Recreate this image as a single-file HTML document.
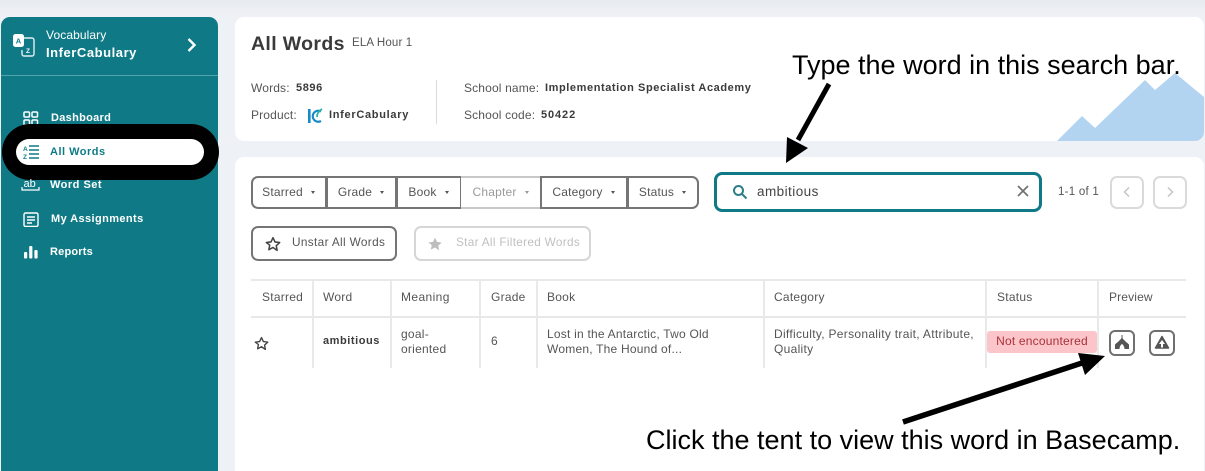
<!DOCTYPE html>
<html><head><meta charset="utf-8">
<style>
html,body{margin:0;padding:0;width:1205px;height:471px;overflow:hidden}
body{position:relative;background:linear-gradient(#e8ebf0,#eef1f6 17px);font-family:"Liberation Sans",sans-serif;color:#555}
.a{position:absolute;white-space:nowrap}
.t{position:absolute;white-space:nowrap;font-size:12px;line-height:14px;color:#555;letter-spacing:.25px}
.b{font-weight:bold;color:#3b3b3b;font-size:11px;letter-spacing:.6px}
.n{position:absolute;white-space:nowrap;font-weight:bold;font-size:11px;line-height:14px;color:#fff;letter-spacing:.4px}
.f{position:absolute;top:176px;height:33px;border:2px solid #757575;box-sizing:border-box;background:#fff;font-size:12px;line-height:29px;color:#555;text-align:center;letter-spacing:.2px;padding-right:1px}
.f i{display:inline-block;width:0;height:0;border-left:2.5px solid transparent;border-right:2.5px solid transparent;border-top:3px solid currentColor;margin-left:8px;vertical-align:2px}
.v{position:absolute;width:1.5px;background:#e9e9e9}
.h{position:absolute;height:2px;background:#e8e8e8;left:251px;width:935px}
</style></head><body>
<div class="a" style="left:1px;top:17px;width:217px;height:454px;background:#0f7a86;border-radius:9px 9px 0 0"></div>
<div class="a" style="left:1px;top:75px;width:217px;height:1px;background:#4fa3ac"></div>
<svg class="a" style="left:12px;top:33px" width="26" height="26" viewBox="0 0 26 26">
<path d="M12 5h8a2 2 0 0 1 2 2v14a2 2 0 0 1-2 2h-8a2 2 0 0 1-2-2v-4" fill="none" stroke="#e2f0f1" stroke-width="1.4"/>
<rect x="1" y="1" width="11" height="13" rx="2.5" fill="#fff"/>
<text x="6.500" y="10.500" font-size="7.500" font-weight="bold" text-anchor="middle" fill="#0f7a86" font-family="Liberation Sans">A</text>
<text x="16" y="20" font-size="6.500" font-weight="bold" text-anchor="middle" fill="#fff" font-family="Liberation Sans">Z</text>
</svg>
<div class="a" style="left:46px;top:28px;font-size:12px;line-height:14px;color:#fff;letter-spacing:.1px">Vocabulary</div>
<div class="a" style="left:46px;top:45px;font-size:13px;line-height:15px;color:#fff;font-weight:bold;letter-spacing:.55px">InferCabulary</div>
<svg class="a" style="left:186px;top:37px" width="12" height="16" viewBox="0 0 12 16"><path d="M2.500 2l6 6-6 6" fill="none" stroke="#fff" stroke-width="2.400"/></svg>

<svg class="a" style="left:23px;top:111px" width="16" height="14" viewBox="0 0 16 14" fill="none" stroke="#fff" stroke-width="1.500"><rect x="1" y="1" width="5.500" height="5" rx="1"/><rect x="9" y="1" width="5.500" height="5" rx="1"/><rect x="1" y="9" width="5.500" height="5" rx="1"/><rect x="9" y="9" width="5.500" height="5" rx="1"/></svg>
<div class="n" style="left:51px;top:111px;letter-spacing:.3px">Dashboard</div>

<div class="a" style="left:2px;top:124px;width:217px;height:56px;background:#000;border-radius:28px"></div>
<div class="a" style="left:16px;top:139px;width:188px;height:26px;background:#fff;border-radius:13px"></div>
<svg class="a" style="left:23px;top:144px" width="16" height="16" viewBox="0 0 16 16"><text x="0" y="7" font-size="6.500" font-weight="bold" fill="#0f7a86" font-family="Liberation Sans">A</text><text x="0" y="15" font-size="6.500" font-weight="bold" fill="#0f7a86" font-family="Liberation Sans">Z</text><path d="M6 2h10M6 6h10M6 10h10M6 14h10" stroke="#0f7a86" stroke-width="1.400"/></svg>
<div class="n" style="left:50px;top:145px;color:#0f7a86;letter-spacing:.5px">All Words</div>

<svg class="a" style="left:21px;top:178px" width="20" height="14" viewBox="0 0 20 14"><text x="2.500" y="9" font-size="11" fill="#fff" font-family="Liberation Sans">ab</text><path d="M1 9v3h17V9" fill="none" stroke="#fff" stroke-width="1.200"/></svg>
<div class="n" style="left:50px;top:178px;letter-spacing:.5px">Word Set</div>

<svg class="a" style="left:23px;top:212px" width="16" height="15" viewBox="0 0 16 15" fill="none" stroke="#fff" stroke-width="1.400"><rect x="1" y="1" width="14" height="13.500" rx="1.500"/><path d="M4 5h8M4 8h8M4 11h5"/></svg>
<div class="n" style="left:51px;top:212px">My Assignments</div>

<svg class="a" style="left:24px;top:245px" width="14" height="14" viewBox="0 0 14 14" fill="#fff"><rect x="0" y="7" width="3.200" height="6.500" rx="1"/><rect x="5.200" y="1" width="3.200" height="12.500" rx="1"/><rect x="10.400" y="5" width="3.200" height="8.500" rx="1"/></svg>
<div class="n" style="left:50px;top:245px;letter-spacing:.2px">Reports</div>

<!-- header card -->
<div class="a" style="left:235px;top:17px;width:969px;height:124px;background:#fff;border-radius:9px;overflow:hidden">
<svg class="a" style="left:821px;top:55px" width="148" height="69" viewBox="0 0 148 69"><path d="M1 69L26 44 39 56 89 8 99 18 119 1 148 25V69Z" fill="#b3d4f0"/></svg>
</div>
<div class="a" style="left:251px;top:33px;font-size:19.500px;line-height:23px;font-weight:bold;color:#3a3a3a;letter-spacing:.35px">All Words</div>
<div class="t" style="left:352px;top:36px;font-size:11.500px;letter-spacing:.15px">ELA Hour 1</div>
<div class="t" style="left:251px;top:81px;letter-spacing:.15px">Words:</div>
<div class="t b" style="left:296px;top:81px">5896</div>
<div class="t" style="left:251px;top:108px;letter-spacing:.15px">Product:</div>
<svg class="a" style="left:307px;top:108px" width="17" height="16" viewBox="0 0 17 16"><rect x="1" y="1" width="2.600" height="14" fill="#1689c9"/><path d="M14 3.500A5.500 5.500 0 1 0 14 13" fill="none" stroke="#1689c9" stroke-width="2.200"/><path d="M15 1Q10 4 10 9" fill="none" stroke="#2bb0a8" stroke-width="1.800"/></svg>
<div class="t b" style="left:329px;top:108px;letter-spacing:.7px">InferCabulary</div>
<div class="a" style="left:435.500px;top:80px;width:1.500px;height:44px;background:#dadada"></div>
<div class="t" style="left:464px;top:81px;letter-spacing:.15px">School name:</div>
<div class="t b" style="left:545px;top:81px;letter-spacing:.58px">Implementation Specialist Academy</div>
<div class="t" style="left:464px;top:108px;letter-spacing:.15px">School code:</div>
<div class="t b" style="left:541px;top:108px;letter-spacing:.9px">50422</div>

<!-- main card -->
<div class="a" style="left:235px;top:157px;width:969px;height:314px;background:#fff;border-radius:9px 9px 0 0"></div>

<div class="f" style="left:251px;width:76px;border-radius:7px 0 0 7px">Starred<i></i></div>
<div class="f" style="left:326px;width:71px">Grade<i></i></div>
<div class="f" style="left:396px;width:66px">Book<i></i></div>
<div class="f" style="left:461px;width:80px;color:#9a9a9a;border-color:#c8c8c8;border-left:none;border-right:none">Chapter<i></i></div>
<div class="f" style="left:540px;width:88px">Category<i></i></div>
<div class="f" style="left:627px;width:72px;border-radius:0 7px 7px 0">Status<i></i></div>

<div class="a" style="left:251px;top:226px;width:146px;height:35px;border:2px solid #757575;border-radius:7px;box-sizing:border-box"></div>
<svg class="a" style="left:265px;top:236px" width="16" height="16" viewBox="0 0 24 24"><path d="M12 2.500l3 6.400 7 .9-5.100 4.800 1.300 6.900L12 17.200l-6.200 3.300 1.300-6.900L2 9.800l7-.9z" fill="none" stroke="#444" stroke-width="2.300" stroke-linejoin="round"/></svg>
<div class="t" style="left:292px;top:235px;font-size:11.800px;letter-spacing:.35px">Unstar All Words</div>
<div class="a" style="left:414px;top:226px;width:177px;height:35px;border:2px solid #d6d6d6;border-radius:7px;box-sizing:border-box"></div>
<svg class="a" style="left:427px;top:236px" width="16" height="16" viewBox="0 0 24 24"><path d="M12 2.500l3 6.400 7 .9-5.100 4.800 1.300 6.900L12 17.200l-6.200 3.300 1.300-6.900L2 9.800l7-.9z" fill="#bdbdbd"/></svg>
<div class="t" style="left:456px;top:235px;font-size:11.800px;color:#c0c0c0;letter-spacing:.3px">Star All Filtered Words</div>

<!-- search -->
<div class="a" style="left:714px;top:172px;width:328px;height:40px;border:3.500px solid #0f7a86;border-radius:8px;box-sizing:border-box"></div>
<svg class="a" style="left:732px;top:184px" width="16" height="16" viewBox="0 0 16 16" fill="none" stroke="#2d7f88" stroke-width="2"><circle cx="6.500" cy="6.500" r="4.500"/><path d="M10 10l4.500 4.500"/></svg>
<div class="a" style="left:757px;top:184px;font-size:13.500px;line-height:16px;color:#444;letter-spacing:.45px">ambitious</div>
<svg class="a" style="left:1017px;top:185px" width="12" height="12" viewBox="0 0 12 12"><path d="M1 1l10 10M11 1L1 11" stroke="#707070" stroke-width="1.700"/></svg>
<div class="t" style="left:1058px;top:185px;font-size:11.500px">1-1 of 1</div>
<div class="a" style="left:1110px;top:176px;width:34px;height:33px;border:2px solid #dadada;border-radius:7px;box-sizing:border-box"></div>
<div class="a" style="left:1153px;top:176px;width:34px;height:33px;border:2px solid #dadada;border-radius:7px;box-sizing:border-box"></div>
<svg class="a" style="left:1122px;top:186px" width="10" height="12" viewBox="0 0 10 12"><path d="M7 1.500L2.500 6 7 10.500" fill="none" stroke="#c4c4c4" stroke-width="1.500"/></svg>
<svg class="a" style="left:1165px;top:186px" width="10" height="12" viewBox="0 0 10 12"><path d="M3 1.500L7.500 6 3 10.500" fill="none" stroke="#c4c4c4" stroke-width="1.500"/></svg>

<!-- table -->
<div class="h" style="top:279px"></div>
<div class="h" style="top:316px"></div>
<div class="v" style="left:312px;top:280px;height:88px"></div>
<div class="v" style="left:390px;top:280px;height:88px"></div>
<div class="v" style="left:479px;top:280px;height:88px"></div>
<div class="v" style="left:536px;top:280px;height:88px"></div>
<div class="v" style="left:763px;top:280px;height:88px"></div>
<div class="v" style="left:985px;top:280px;height:88px"></div>
<div class="v" style="left:1097px;top:280px;height:88px"></div>

<div class="t" style="left:262px;top:290px">Starred</div>
<div class="t" style="left:323px;top:290px">Word</div>
<div class="t" style="left:401px;top:290px;letter-spacing:.4px">Meaning</div>
<div class="t" style="left:491px;top:290px">Grade</div>
<div class="t" style="left:547px;top:290px">Book</div>
<div class="t" style="left:774px;top:290px">Category</div>
<div class="t" style="left:997px;top:290px">Status</div>
<div class="t" style="left:1109px;top:290px;letter-spacing:.15px">Preview</div>

<svg class="a" style="left:254px;top:336px" width="15" height="15" viewBox="0 0 24 24"><path d="M12 2.500l3 6.400 7 .9-5.100 4.800 1.300 6.900L12 17.200l-6.200 3.300 1.300-6.900L2 9.800l7-.9z" fill="none" stroke="#444" stroke-width="2.200" stroke-linejoin="round"/></svg>
<div class="t b" style="left:323px;top:334px;letter-spacing:.55px">ambitious</div>
<div class="t" style="left:401px;top:327px;line-height:15px">goal-<br>oriented</div>
<div class="t" style="left:491px;top:334px">6</div>
<div class="t" style="left:547px;top:327px;line-height:15px;letter-spacing:.22px">Lost in the Antarctic, Two Old<br>Women, The Hound of...</div>
<div class="t" style="left:774px;top:327px;line-height:15px;letter-spacing:.3px">Difficulty, Personality trait, Attribute,<br>Quality</div>
<div class="a" style="left:987px;top:331px;width:110px;height:22px;background:#fcc5c9;border-radius:3px;font-size:12px;line-height:20px;color:#a8323c;text-align:center;letter-spacing:.2px">Not encountered</div>

<div class="a" style="left:1109px;top:330px;width:26px;height:26px;border:2px solid #707070;border-radius:6px;box-sizing:border-box"></div>
<svg class="a" style="left:1113px;top:334px" width="18" height="18" viewBox="0 0 18 18"><path d="M9 1v3" stroke="#555" stroke-width="1"/><path d="M9 3.500C7.500 6 4 8.500 2 10.500V15H6.500C6.500 12.500 8 10.500 9 10C10 10.500 11.500 12.500 11.500 15H16V10.500C14 8.500 10.500 6 9 3.500Z" fill="#555"/></svg>
<div class="a" style="left:1149px;top:330px;width:26px;height:26px;border:2px solid #707070;border-radius:6px;box-sizing:border-box"></div>
<svg class="a" style="left:1153px;top:334px" width="18" height="18" viewBox="0 0 18 18"><path d="M9 2.500L15.500 14H2.500Z" fill="#555" stroke="#555" stroke-width="1.500" stroke-linejoin="round"/><path d="M9 6L12 10H10V13.500H8V10H6Z" fill="#fff"/></svg>

<!-- annotations -->
<div class="a" style="left:792px;top:50px;font-size:27px;line-height:31px;color:#000">Type the word in this search bar.</div>
<div class="a" style="left:646px;top:425px;font-size:27px;line-height:31px;color:#000">Click the tent to view this word in Basecamp.</div>
<svg class="a" style="left:0;top:0" width="1205" height="471" viewBox="0 0 1205 471">
<path d="M829 84L798 140" stroke="#000" stroke-width="5"/>
<path d="M786 163L787 137 808 148Z" fill="#000"/>
<path d="M903 422L1085 362" stroke="#000" stroke-width="5.500"/>
<path d="M1105 356L1085 375 1078 353Z" fill="#000"/>
</svg>
</body></html>
